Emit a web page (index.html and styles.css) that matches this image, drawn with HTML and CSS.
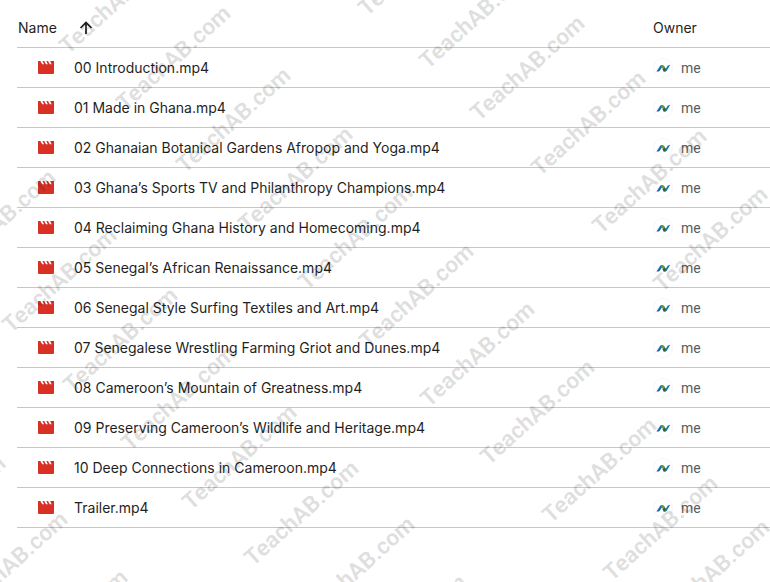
FILE: index.html
```
<!DOCTYPE html>
<html lang="en">
<head>
  <meta charset="UTF-8">
  <meta name="viewport" content="width=device-width, initial-scale=1.0">
  <title>Files</title>
  <link rel="stylesheet" href="styles.css">
</head>
<body>

  <!-- Shared icons -->
  <svg class="sprite" aria-hidden="true">
    <symbol id="icon-video" viewBox="0 0 16 13">
      <path fill="#d93025" d="M0 0H2.400L4.200 3.200H6L4.500 0H6.200L8 3.200H9.800L8.300 0H10L11.800 3.200H13.600L12.100 0H16v12a1 1 0 0 1-1 1H1a1 1 0 0 1-1-1z"/>
    </symbol>
    <symbol id="icon-owner" viewBox="0 0 20 20">
      <circle cx="10" cy="10" r="9.500" fill="#fff" stroke="#f6f6f6"/>
      <path fill="#1769aa" d="M3.400 13.600 7 8.200Q7.800 7 9.200 7L9.500 8.500 6.900 12.400Q6 13.600 4.800 13.600z"/>
      <path fill="#6a9e32" d="M7.300 7.600Q8.200 6.800 9.500 6.900 11 7 11.500 8.200L12.500 10.800 10.300 12.600 8.700 8.800z"/>
      <path fill="#26663b" d="M9.700 11 12 9.600 13.600 12.200Q12.800 13.800 11.400 13.800 10.500 13.800 10.100 12.800z"/>
      <path fill="#1976b8" d="M12.200 11.800 14.500 8Q15.100 7 17.200 7L14.300 11.700Q13.400 13.200 12.600 13.300z"/>
    </symbol>
  </svg>

  <table class="files">
    <thead>
      <tr>
        <th class="name-col" scope="col">
          <div class="heading">
            Name
            <button class="sort-btn" type="button" aria-label="Sort by name">
              <svg viewBox="0 0 14 14" width="14" height="14"><path d="M7 13V2M1.500 7 7 1.500 12.500 7" fill="none" stroke="#1f1f1f" stroke-width="1.700"/></svg>
            </button>
          </div>
        </th>
        <th class="owner-col" scope="col">Owner</th>
      </tr>
    </thead>
    <tbody id="fileRows"></tbody>
  </table>

  <svg class="watermark" id="watermark" aria-hidden="true"></svg>

  <script>
    const files = [
      '00 Introduction.mp4',
      '01 Made in Ghana.mp4',
      '02 Ghanaian Botanical Gardens Afropop and Yoga.mp4',
      '03 Ghana’s Sports TV and Philanthropy Champions.mp4',
      '04 Reclaiming Ghana History and Homecoming.mp4',
      '05 Senegal’s African Renaissance.mp4',
      '06 Senegal Style Surfing Textiles and Art.mp4',
      '07 Senegalese Wrestling Farming Griot and Dunes.mp4',
      '08 Cameroon’s Mountain of Greatness.mp4',
      '09 Preserving Cameroon’s Wildlife and Heritage.mp4',
      '10 Deep Connections in Cameroon.mp4',
      'Trailer.mp4'
    ];

    document.getElementById('fileRows').innerHTML = files.map(name => `
      <tr>
        <td>
          <div class="file">
            <svg class="file-icon"><use href="#icon-video"/></svg>
            <span>${name}</span>
          </div>
        </td>
        <td>
          <div class="owner">
            <svg class="owner-icon"><use href="#icon-owner"/></svg>
            <span>me</span>
          </div>
        </td>
      </tr>
    `).join('');

    // Baseline start of each diagonal mark
    const marks = [
      [68, 55], [125, 112], [185, 174], [247, 233], [307, 291],
      [368, 350], [429, 408], [489, 466], [551, 524], [612, 582], [664, 626],
      [367, 17], [428, 70], [479, 122], [540, 177], [601, 235], [662, 293],
      [-50, 276], [11, 334], [72, 394], [130, 452], [191, 511], [253, 567],
      [309, 623], [361, 681], [-100, 562], [-38, 618], [22, 676]
    ];

    document.getElementById('watermark').innerHTML = marks.map(([x, y]) =>
      `<text transform="translate(${x} ${y}) rotate(-42)">TeachAB.com</text>`
    ).join('');
  </script>

</body>
</html>
```
FILE: styles.css
```
body {
  margin: 0;
  background-color: #fff;
  color: #1f1f1f;
  font-family: Inter, Roboto, sans-serif;
  font-size: 14px;
  line-height: 20px;
}

.sprite {
  display: none;
}

.files {
  width: calc(100% - 17px);
  margin: 8px 0 0 17px;
  border-collapse: separate;
  border-spacing: 0;
  table-layout: fixed;
}

.files th,
.files td {
  height: 39px;
  padding: 0;
  border-bottom: 1px solid #c7c7c7;
  text-align: left;
  font-weight: 400;
}

.files th {
  padding-left: 1px;
}

.files .owner-col {
  width: 117px;
  padding-left: 0;
}

.heading,
.file,
.owner {
  display: flex;
  align-items: center;
}

.heading {
  gap: 22px;
}

.sort-btn {
  display: flex;
  padding: 0;
  border: none;
  background: none;
  cursor: pointer;
}

.file {
  gap: 20px;
  padding-left: 21px;
}

.file-icon {
  width: 16px;
  height: 13px;
}

.owner {
  gap: 8px;
  color: #5a5d5c;
  font-family: Roboto, sans-serif;
}

.owner-icon {
  width: 20px;
  height: 20px;
}

/* Sits over the whole page */
.watermark {
  position: absolute;
  top: 0;
  left: 0;
  width: 100%;
  height: 100%;
  overflow: hidden;
  pointer-events: none;
}

.watermark text {
  fill: #000;
  fill-opacity: 0.13;
  font-family: Roboto, sans-serif;
  font-size: 23px;
  font-weight: 700;
}
```
